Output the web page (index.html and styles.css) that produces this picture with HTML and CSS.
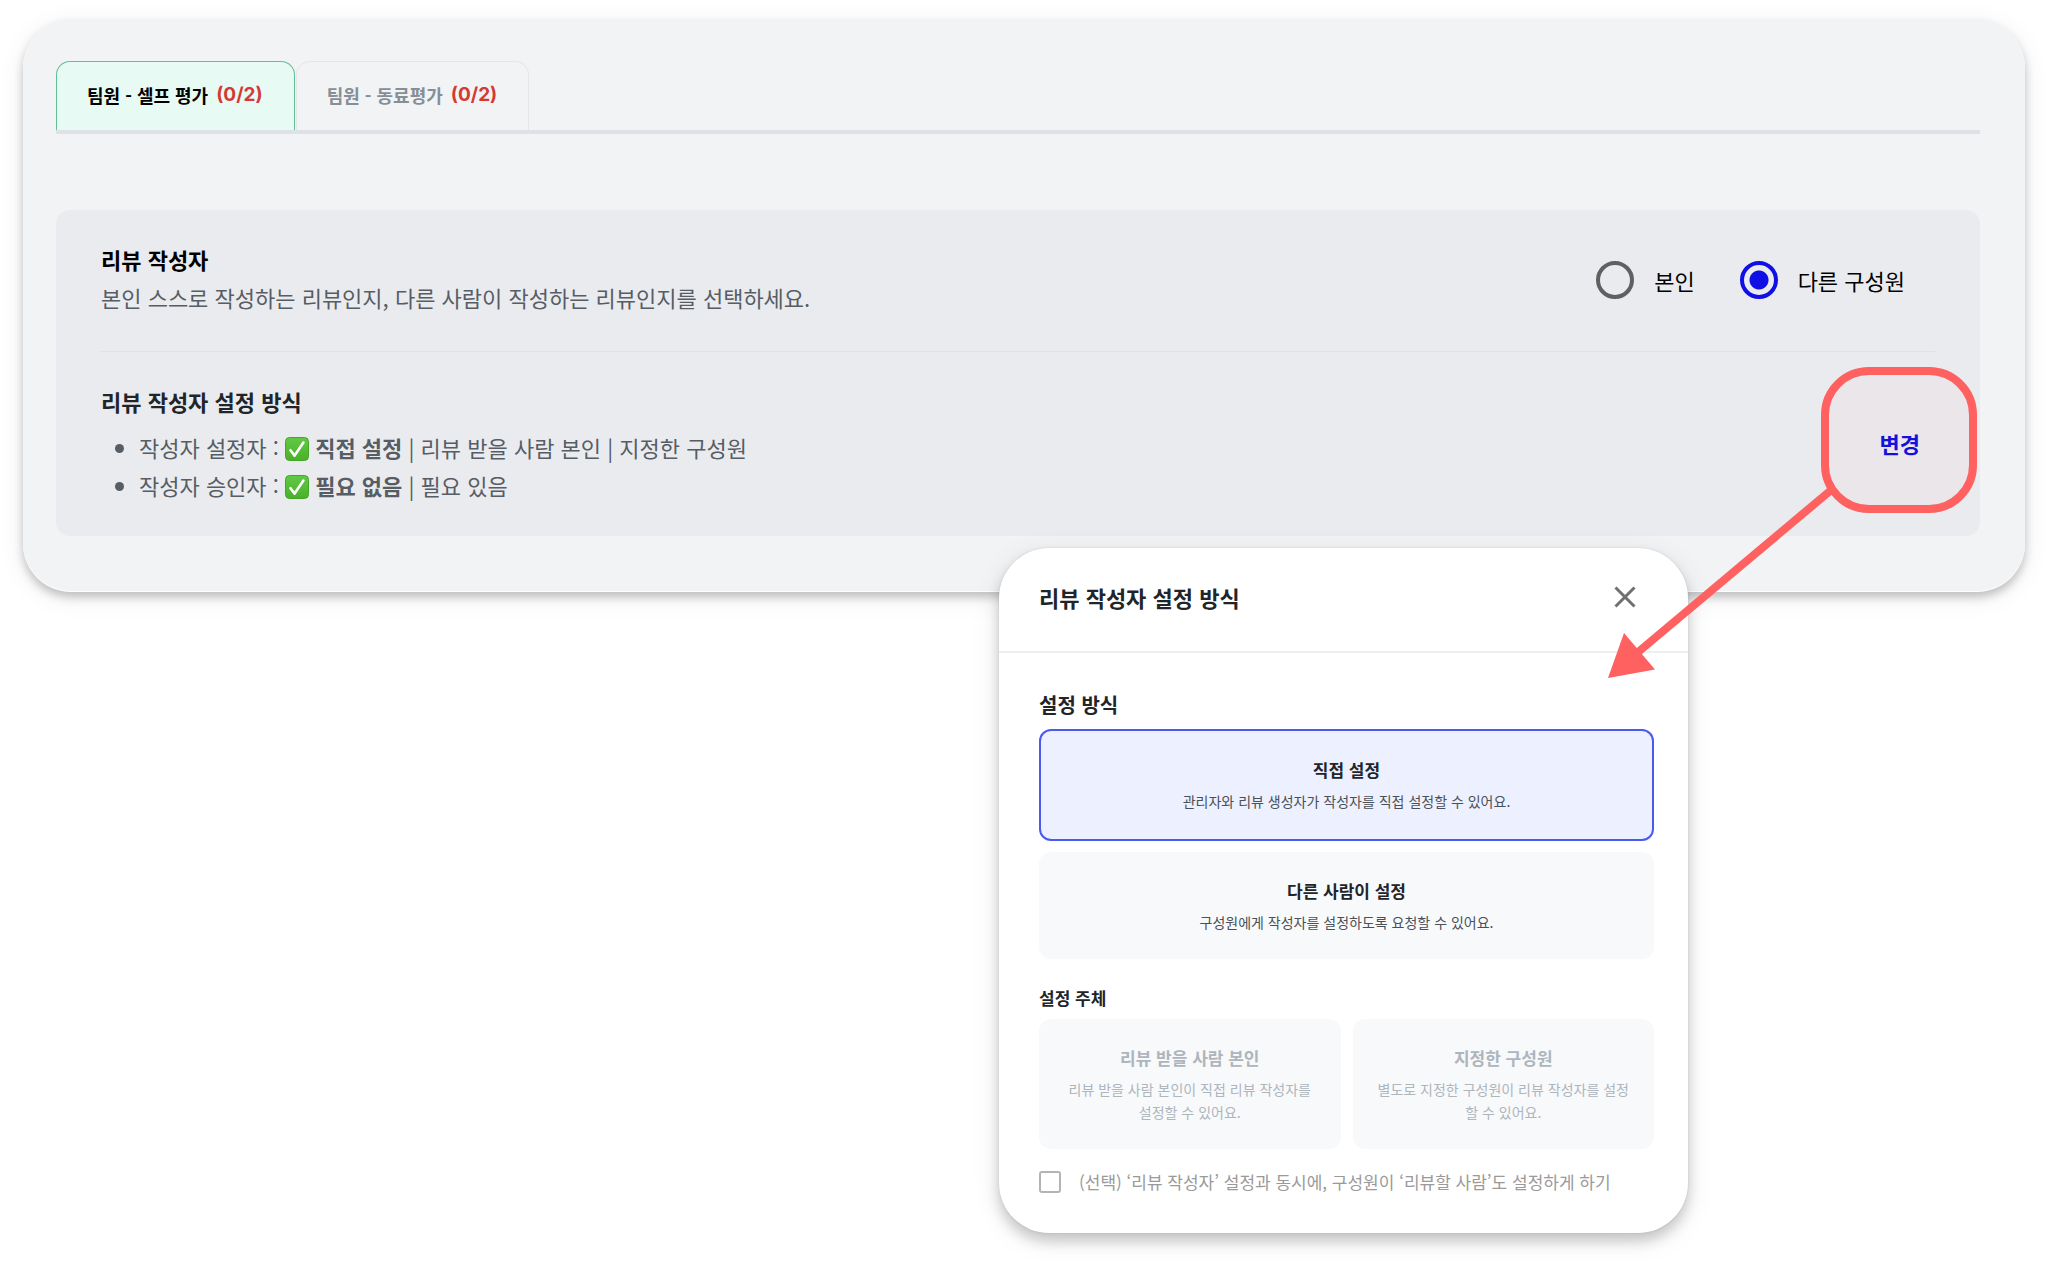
FILE: index.html
```html
<!DOCTYPE html>
<html lang="ko">
<head>
  <meta charset="utf-8">
  <title>리뷰 작성자 설정</title>
  <link rel="stylesheet" href="styles.css">
</head>
<body>

<svg class="defs" aria-hidden="true">
  <linearGradient id="green" x1="0" y1="0" x2="0" y2="1">
    <stop offset="0" stop-color="#62c944"/>
    <stop offset="1" stop-color="#49b129"/>
  </linearGradient>
  <symbol id="check" viewBox="0 0 24 24">
    <rect x="0.5" y="0.5" width="23" height="23" rx="4" fill="url(#green)" stroke="#45a52b"/>
    <path d="M5.5 13.2L9.6 18.6L18.4 5.6" fill="none" stroke="#fff" stroke-width="2.6" stroke-linecap="round" stroke-linejoin="round"/>
  </symbol>
</svg>

<main class="board">
  <nav class="tabs">
    <button class="tab active">팀원 - 셀프 평가 <span class="count">(0/2)</span></button>
    <button class="tab">팀원 - 동료평가 <span class="count">(0/2)</span></button>
  </nav>

  <section class="panel">
    <div class="row">
      <div>
        <h2>리뷰 작성자</h2>
        <p>본인 스스로 작성하는 리뷰인지, 다른 사람이 작성하는 리뷰인지를 선택하세요.</p>
      </div>
      <div class="radios">
        <label><input type="radio" name="writer"> 본인</label>
        <label><input type="radio" name="writer" checked> 다른 구성원</label>
      </div>
    </div>

    <div class="row">
      <div>
        <h2 class="dark">리뷰 작성자 설정 방식</h2>
        <ul>
          <li>작성자 설정자 : <svg class="check"><use href="#check"/></svg> <b>직접 설정</b> | 리뷰 받을 사람 본인 | 지정한 구성원</li>
          <li>작성자 승인자 : <svg class="check"><use href="#check"/></svg> <b>필요 없음</b> | 필요 있음</li>
        </ul>
      </div>
      <div class="change">
        <div class="highlight"></div>
        <svg class="arrow" viewBox="0 0 232 196" aria-hidden="true">
          <path d="M226 5L33 167" stroke="#ff6060" stroke-width="8"/>
          <path d="M4 192L20 147L51 183.500Z" fill="#ff6060"/>
        </svg>
        <button>변경</button>
      </div>
    </div>
  </section>
</main>

<section class="modal" role="dialog" aria-labelledby="modal-title">
  <header>
    <h2 id="modal-title">리뷰 작성자 설정 방식</h2>
    <button class="close" aria-label="닫기">
      <svg viewBox="0 0 22 22"><path d="M1.500 1.500L20.500 20.500M20.500 1.500L1.500 20.500" stroke="#707070" stroke-width="3"/></svg>
    </button>
  </header>
  <div class="modal-body">
    <h3 class="large">설정 방식</h3>
    <button class="option selected">
      <strong>직접 설정</strong>
      <span>관리자와 리뷰 생성자가 작성자를 직접 설정할 수 있어요.</span>
    </button>
    <button class="option">
      <strong>다른 사람이 설정</strong>
      <span>구성원에게 작성자를 설정하도록 요청할 수 있어요.</span>
    </button>

    <h3>설정 주체</h3>
    <div class="pair">
      <button class="option" disabled>
        <strong>리뷰 받을 사람 본인</strong>
        <span>리뷰 받을 사람 본인이 직접 리뷰 작성자를 설정할 수 있어요.</span>
      </button>
      <button class="option" disabled>
        <strong>지정한 구성원</strong>
        <span>별도로 지정한 구성원이 리뷰 작성자를 설정할 수 있어요.</span>
      </button>
    </div>

    <label class="together"><input type="checkbox" disabled> (선택) ‘리뷰 작성자’ 설정과 동시에, 구성원이 ‘리뷰할 사람’도 설정하게 하기</label>
  </div>
</section>

</body>
</html>
```
FILE: styles.css
```css
* {
  box-sizing: border-box;
}

body {
  margin: 0;
  padding: 19px 23px 40px;
  background: #fff;
  font-family: "Noto Sans CJK KR", sans-serif;
  font-size: 22px;
  line-height: 38px;
  color: #000;
}

h2, h3, p, ul {
  margin: 0;
}

h2 {
  font-size: 22px;
}

button {
  font: inherit;
  border: none;
  background: none;
  padding: 0;
  color: inherit;
  cursor: pointer;
}

.defs {
  position: absolute;
  width: 0;
  height: 0;
}

.board {
  padding: 42px 45px 55px 33px;
  border-radius: 48px;
  background: #f1f3f5;
  box-shadow: 0 1px 0 #fff, 0 6px 10px rgba(0, 0, 0, 0.22), 0 6px 28px rgba(0, 0, 0, 0.07);
}

/* tabs */
.tabs {
  display: flex;
  gap: 1px;
  border-bottom: 4px solid #dee2e6;
}

.tab {
  display: flex;
  gap: 8px;
  padding: 14px 31px 16px 30px;
  border: 1px solid #e4e6e9;
  border-bottom: none;
  border-radius: 14px 14px 0 0;
  font-size: 18px;
  font-weight: bold;
  color: #868e96;
}

.tab.active {
  border-color: #63bf95;
  background: #e8faf4;
  color: #000;
}

.count {
  font-family: Inter, sans-serif;
  font-size: 19px;
  color: #d43a34;
}

/* settings panel */
.panel {
  margin-top: 76px;
  padding: 0 45px;
  border-radius: 14px;
  background: #eaebef;
}

.row {
  display: flex;
  justify-content: space-between;
  align-items: center;
  padding: 30px 0 35px;
}

.row + .row {
  padding-bottom: 32px;
  border-top: 1px solid #dfe1e5;
}

.row p, .row ul {
  color: #565d64;
}

.dark {
  color: #212529;
}

.row ul {
  margin-top: 8px;
  padding-left: 38px;
}

.check {
  width: 24px;
  height: 24px;
  vertical-align: -4px;
}

.radios {
  display: flex;
  gap: 45px;
  padding-top: 4px;
  padding-right: 30px;
}

.radios label {
  display: flex;
  align-items: center;
  gap: 20px;
}

.radios input {
  appearance: none;
  width: 38px;
  height: 38px;
  margin: 0;
  border: 4px solid #606060;
  border-radius: 50%;
}

.radios input:checked {
  border-color: #1010e6;
  background: radial-gradient(circle, #1010e6 9px, transparent 10px);
}

.change {
  position: relative;
}

.change button {
  position: relative;
  padding: 0 15px;
  font-weight: bold;
  color: #1212dc;
}

.highlight {
  position: absolute;
  inset: -57px -42px -51px -44px;
  border: 8px solid #ff6060;
  border-radius: 48px;
  background: rgba(255, 96, 96, 0.03);
}

.arrow {
  position: absolute;
  z-index: 2;
  top: 62px;
  right: 99px;
  width: 232px;
  height: 196px;
  pointer-events: none;
}

/* dialog */
.modal {
  width: 689px;
  margin: -43px 337px 0 auto;
  position: relative;
  z-index: 1;
  border-radius: 50px;
  background: #fff;
  color: #212529;
  box-shadow: 0 0 2px rgba(0, 0, 0, 0.12), 0 8px 14px rgba(0, 0, 0, 0.2), 0 6px 32px rgba(0, 0, 0, 0.07);
}

.modal header {
  display: flex;
  justify-content: space-between;
  align-items: center;
  padding: 30px 52px 35px 40px;
  border-bottom: 2px solid #efefef;
}

.close {
  display: flex;
}

.close svg {
  width: 22px;
  height: 22px;
}

.modal-body {
  padding: 37px 34px 32px 40px;
}

h3 {
  margin-top: 24px;
  margin-bottom: 6px;
  font-size: 17px;
  line-height: 30px;
}

h3.large {
  margin-top: 0;
  margin-bottom: 9px;
  font-size: 20px;
}

.option {
  display: block;
  width: 100%;
  padding: 25px 24px;
  border-radius: 12px;
  background: #f8f9fb;
  text-align: center;
}

.option + .option {
  margin-top: 11px;
}

.option strong, .option span {
  display: block;
}

.option strong {
  margin-bottom: 7px;
  font-size: 17px;
  line-height: 27px;
}

.option span {
  font-size: 14px;
  line-height: 23px;
  color: #495057;
}

.option.selected {
  padding: 27px 24px 28px;
  background: #edf0fe;
  box-shadow: inset 0 0 0 2px #4a5af0;
}

.pair {
  display: grid;
  grid-template-columns: 1fr 1fr;
  gap: 12px;
}

.pair .option {
  margin-top: 0;
}

.pair strong, .pair span {
  color: #adb5bd;
}

.together {
  display: flex;
  align-items: center;
  gap: 18px;
  margin-top: 14px;
  font-size: 17px;
  color: #9a9a9a;
}

.together input {
  appearance: none;
  width: 22px;
  height: 22px;
  margin: 0;
  border: 2px solid #b4b4b4;
  border-radius: 3px;
}
```
